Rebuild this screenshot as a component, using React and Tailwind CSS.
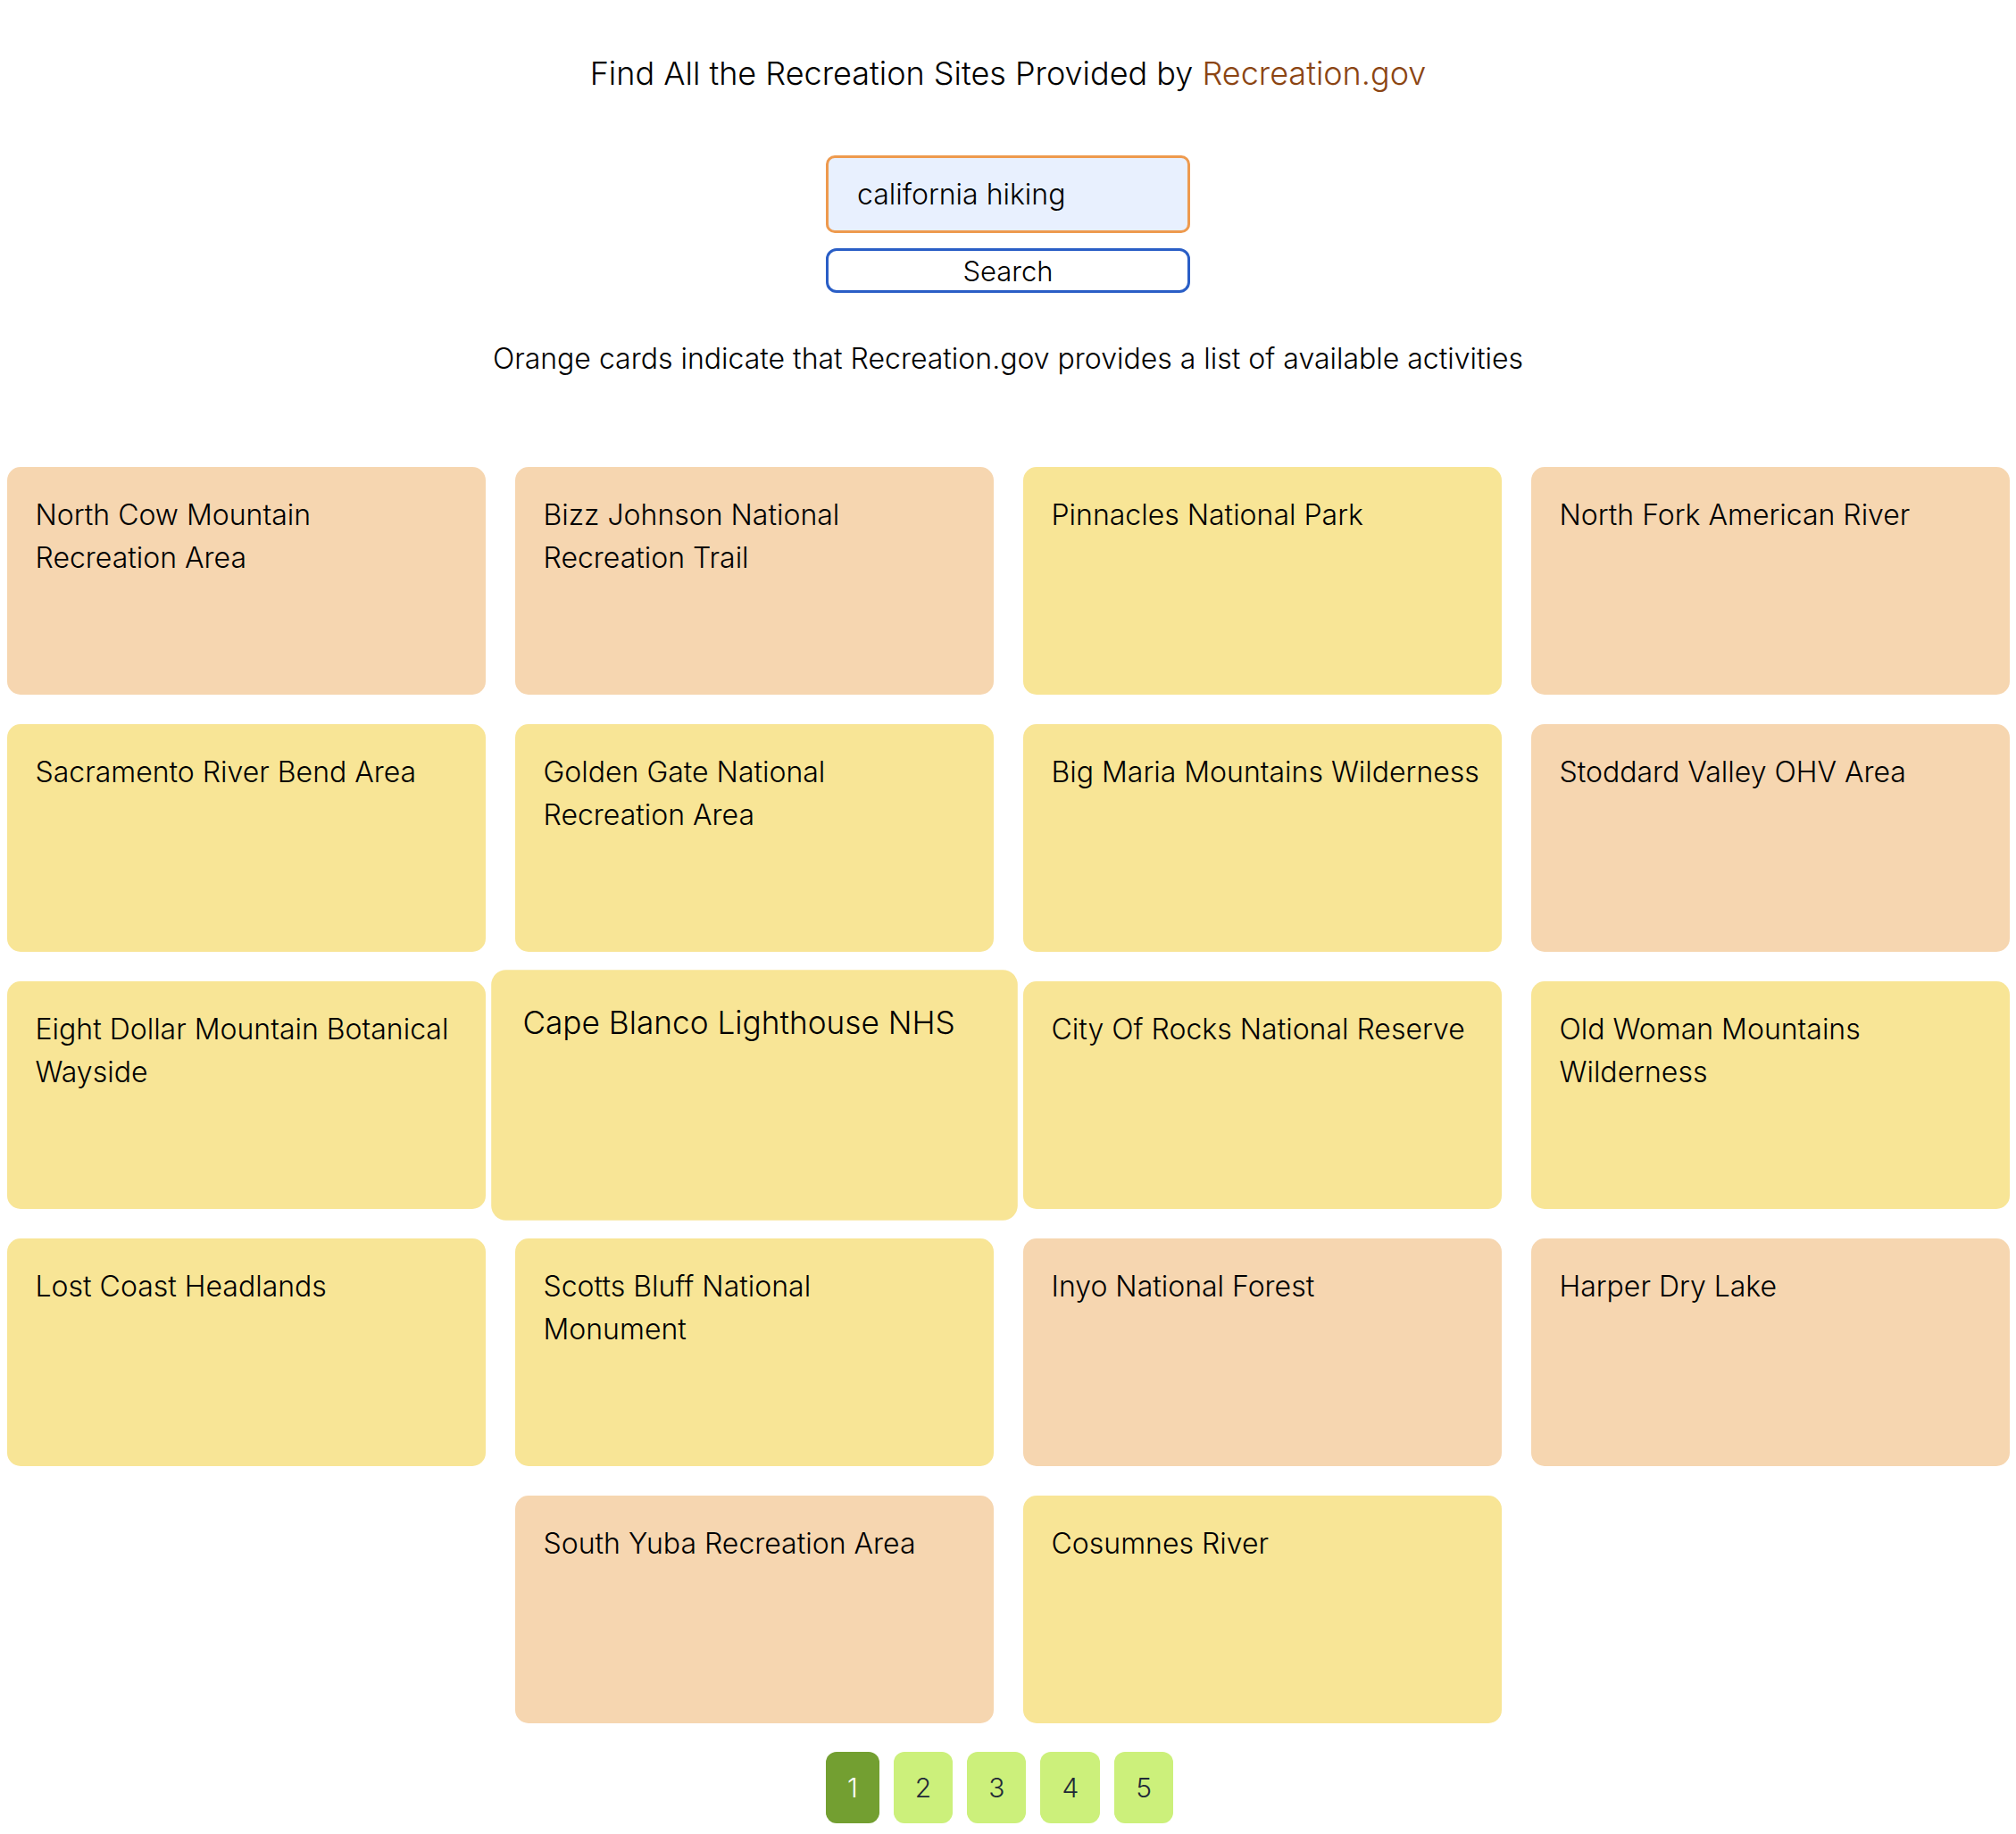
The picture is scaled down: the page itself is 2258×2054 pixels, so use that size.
import React from "react";

const ORANGE = "bg-[#f6d6b0]";
const YELLOW = "bg-[#f8e596]";

const cards = [
  { lines: ["North Cow Mountain", "Recreation Area"], orange: true },
  { lines: ["Bizz Johnson National", "Recreation Trail"], orange: true },
  { lines: ["Pinnacles National Park"], orange: false },
  { lines: ["North Fork American River"], orange: true },
  { lines: ["Sacramento River Bend Area"], orange: false },
  { lines: ["Golden Gate National", "Recreation Area"], orange: false },
  { lines: ["Big Maria Mountains Wilderness"], orange: false },
  { lines: ["Stoddard Valley OHV Area"], orange: true },
  { lines: ["Eight Dollar Mountain Botanical", "Wayside"], orange: false },
  { lines: ["Cape Blanco Lighthouse NHS"], orange: false, hover: true },
  { lines: ["City Of Rocks National Reserve"], orange: false },
  { lines: ["Old Woman Mountains", "Wilderness"], orange: false },
  { lines: ["Lost Coast Headlands"], orange: false },
  { lines: ["Scotts Bluff National", "Monument"], orange: false },
  { lines: ["Inyo National Forest"], orange: true },
  { lines: ["Harper Dry Lake"], orange: true },
  { lines: ["South Yuba Recreation Area"], orange: true },
  { lines: ["Cosumnes River"], orange: false },
];

function Card({ lines, orange, hover }) {
  return (
    <div
      className={
        "w-[536px] h-[255px] rounded-[15px] px-[32px] pt-[30px] text-[32px] leading-[48px] text-black " +
        (orange ? ORANGE : YELLOW) +
        (hover ? " scale-[1.1]" : "")
      }
    >
      {lines.map((l) => (
        <div key={l} className="whitespace-nowrap">
          {l}
        </div>
      ))}
    </div>
  );
}

export default function App() {
  return (
    <div
      className="min-h-[2054px] bg-white text-black pb-[12px] font-light"
      style={{ fontFamily: "Inter, 'Noto Sans', sans-serif" }}
    >
      <h1 className="pt-[61px] text-center text-[36px] leading-[42px] font-light">
        Find All the Recreation Sites Provided by{" "}
        <span className="text-[#8b4513]">Recreation.gov</span>
      </h1>

      <div className="mt-[71px] flex flex-col items-center gap-[17px]">
        <div className="w-[408px] h-[87px] box-border rounded-[10px] border-[3px] border-[#ee9a4e] bg-[#e8f0fe] pl-[32px] flex items-center text-[32px]">
          california hiking
        </div>
        <button className="w-[408px] h-[50px] box-border rounded-[12px] border-[3px] border-[#2a5ec6] bg-white text-[31px] font-light leading-none text-black flex items-center justify-center">
          Search
        </button>
      </div>

      <p className="mt-[55px] text-center text-[32px] leading-[38px]">
        Orange cards indicate that Recreation.gov provides a list of available activities
      </p>

      <div className="mt-[102px] flex flex-wrap justify-center gap-[33px] px-[7px]">
        {cards.map((c) => (
          <Card key={c.lines.join(" ")} {...c} />
        ))}
      </div>

      <div className="mt-[32px] w-[408px] mx-auto flex gap-[16px]">
        <div className="h-[80px] px-[24px] rounded-[12px] bg-[#739f31] text-white text-[30px] flex items-center justify-center">
          1
        </div>
        {["2", "3", "4", "5"].map((n) => (
          <div
            key={n}
            className="h-[80px] px-[24px] rounded-[12px] bg-[#ccf07b] text-[#1f2937] text-[30px] flex items-center justify-center"
          >
            {n}
          </div>
        ))}
      </div>
    </div>
  );
}
